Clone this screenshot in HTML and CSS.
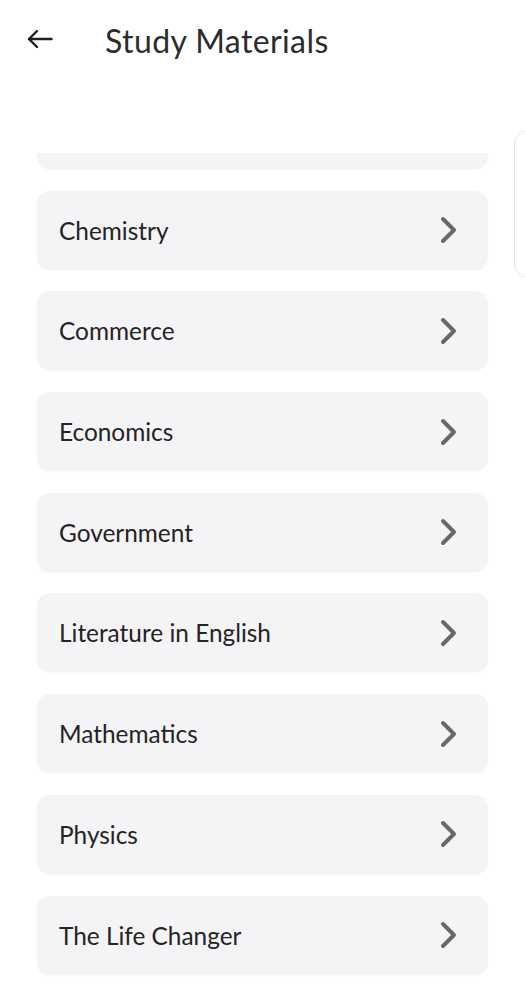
FILE: index.html
```html
<!DOCTYPE html>
<html lang="en">
<head>
<meta charset="utf-8">
<title>Study Materials</title>
<link rel="stylesheet" href="styles.css">
</head>
<body>
<div class="screen">
  <header class="appbar">
    <span class="back" aria-label="Back">
      <svg width="26" height="20" viewBox="0 0 26 20" fill="none" stroke="#1f1f1f" stroke-width="2.4" stroke-linecap="round" stroke-linejoin="round">
        <path d="M24.5 10H2"/>
        <path d="M10 2L2 10l8 8"/>
      </svg>
    </span>
    <h1 class="title">Study Materials</h1>
  </header>
  <div class="viewport">
    <ul class="list">
      <li class="card" aria-hidden="true"></li>
      <li class="card"><span class="label">Chemistry</span><span class="chev"><svg width="20" height="30" viewBox="0 0 20 30" fill="none" stroke="#686868" stroke-width="4" stroke-linecap="round" stroke-linejoin="round"><path d="M4 4l11 11L4 26"/></svg></span></li>
      <li class="card"><span class="label">Commerce</span><span class="chev"><svg width="20" height="30" viewBox="0 0 20 30" fill="none" stroke="#686868" stroke-width="4" stroke-linecap="round" stroke-linejoin="round"><path d="M4 4l11 11L4 26"/></svg></span></li>
      <li class="card"><span class="label">Economics</span><span class="chev"><svg width="20" height="30" viewBox="0 0 20 30" fill="none" stroke="#686868" stroke-width="4" stroke-linecap="round" stroke-linejoin="round"><path d="M4 4l11 11L4 26"/></svg></span></li>
      <li class="card"><span class="label">Government</span><span class="chev"><svg width="20" height="30" viewBox="0 0 20 30" fill="none" stroke="#686868" stroke-width="4" stroke-linecap="round" stroke-linejoin="round"><path d="M4 4l11 11L4 26"/></svg></span></li>
      <li class="card"><span class="label">Literature in English</span><span class="chev"><svg width="20" height="30" viewBox="0 0 20 30" fill="none" stroke="#686868" stroke-width="4" stroke-linecap="round" stroke-linejoin="round"><path d="M4 4l11 11L4 26"/></svg></span></li>
      <li class="card"><span class="label">Mathematics</span><span class="chev"><svg width="20" height="30" viewBox="0 0 20 30" fill="none" stroke="#686868" stroke-width="4" stroke-linecap="round" stroke-linejoin="round"><path d="M4 4l11 11L4 26"/></svg></span></li>
      <li class="card"><span class="label">Physics</span><span class="chev"><svg width="20" height="30" viewBox="0 0 20 30" fill="none" stroke="#686868" stroke-width="4" stroke-linecap="round" stroke-linejoin="round"><path d="M4 4l11 11L4 26"/></svg></span></li>
      <li class="card"><span class="label">The Life Changer</span><span class="chev"><svg width="20" height="30" viewBox="0 0 20 30" fill="none" stroke="#686868" stroke-width="4" stroke-linecap="round" stroke-linejoin="round"><path d="M4 4l11 11L4 26"/></svg></span></li>
    </ul>
  </div>
  <div class="peek"></div>
</div>
</body>
</html>
```
FILE: styles.css
```css
* { box-sizing: border-box; }
html, body {
  margin: 0;
  padding: 0;
  background: #ffffff;
}
body {
  font-family: Lato, "Noto Sans", sans-serif;
  color: #222222;
}
.screen {
  position: relative;
  width: 525px;
  height: 1000px;
  overflow: hidden;
}
.appbar {
  height: 82px;
  display: flex;
  align-items: center;
  padding-left: 27px;
}
.back {
  display: flex;
  width: 26px;
  height: 20px;
  margin-top: -5px;
}
.title {
  margin: 0 0 0 52px;
  font-size: 32px;
  font-weight: 400;
  color: #2c2c2c;
  line-height: 1.2;
  letter-spacing: 0.4px;
}
.viewport {
  margin-top: 71px;
  height: 847px;
  overflow: hidden;
}
.list {
  list-style: none;
  margin: -63px 0 0 0;
  padding: 0 37px;
  display: flex;
  flex-direction: column;
  gap: 21.7px;
}
.card {
  height: 79px;
  flex: none;
  background: #f4f3f5;
  border-radius: 13px;
  display: flex;
  align-items: center;
  justify-content: space-between;
  padding: 0 29px 0 22px;
  box-shadow: 0 1px 2px rgba(0,0,0,0.03);
}
.label {
  font-size: 24.4px;
  color: #242424;
}
.chev {
  display: flex;
}
.peek {
  position: absolute;
  left: 514px;
  top: 130px;
  width: 40px;
  height: 148px;
  border: 1.5px solid #e4e4e4;
  border-radius: 14px;
  background: #ffffff;
}
```
